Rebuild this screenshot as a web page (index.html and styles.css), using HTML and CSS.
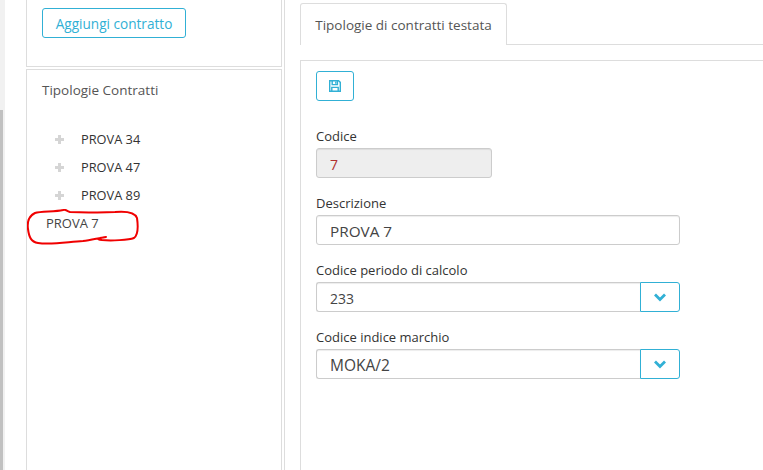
FILE: index.html
```html
<!DOCTYPE html>
<html lang="it">
<head>
  <meta charset="UTF-8">
  <title>Tipologie di contratti</title>
  <link rel="stylesheet" href="styles.css">
</head>
<body>
  <div class="scroll-strip"><div class="scroll-thumb"></div></div>
  <div class="sidebar">
    <div class="panel panel-top">
      <button class="btn-outline" type="button">Aggiungi contratto</button>
    </div>
    <div class="panel panel-tree">
      <div class="tree-title">Tipologie Contratti</div>
      <ul class="tree">
        <li><span class="plus"></span>PROVA 34</li>
        <li><span class="plus"></span>PROVA 47</li>
        <li><span class="plus"></span>PROVA 89</li>
        <li class="leaf">PROVA 7</li>
      </ul>
      <svg class="scribble" width="114" height="40" viewBox="0 0 114 40" fill="none">
        <path d="M36 1 C28 3 14 2 8 4 C2 7 0 13 1 20 C2 28 4 33 11 34 C24 36 40 33 56 32 C64 31 72 29 79 28 C72 29 68 30 75 31 C84 32 102 31 107 29 C111 26 111 16 110 9 C108 3 100 2 88 3 C70 4 52 3 43 3 C40 2 38 0 36 1 Z" stroke="#f00000" stroke-width="2" stroke-linejoin="round"/>
      </svg>
    </div>
  </div>
  <div class="rule"></div>
  <div class="main">
    <div class="tabs">
      <div class="tab">Tipologie di contratti testata</div>
    </div>
    <div class="content">
      <button class="btn-save" type="button" aria-label="Salva">
        <svg width="14" height="14" viewBox="0 0 14 14" fill="none" stroke="#31b0d5" stroke-width="1.4">
          <path d="M1.7 1.7 H10.6 L12.3 3.4 V12.3 H1.7 Z"/>
          <path d="M4.2 2 V5.6 H9.4 V2"/>
          <path d="M3.8 12 V8.4 H10.2 V12"/>
          <path d="M7.8 2.6 V4.8"/>
        </svg>
      </button>
      <div class="field">
        <label>Codice</label>
        <div class="input input-disabled">7</div>
      </div>
      <div class="field">
        <label>Descrizione</label>
        <div class="input input-wide">PROVA 7</div>
      </div>
      <div class="field">
        <label>Codice periodo di calcolo</label>
        <div class="combo">
          <div class="combo-value combo-small">233</div>
          <div class="combo-btn"><svg width="14" height="9" viewBox="0 0 14 9" fill="none" stroke="#31b0d5" stroke-width="2.8"><path d="M2 1.5 L7 6.5 L12 1.5"/></svg></div>
        </div>
      </div>
      <div class="field">
        <label>Codice indice marchio</label>
        <div class="combo">
          <div class="combo-value">MOKA/2</div>
          <div class="combo-btn"><svg width="14" height="9" viewBox="0 0 14 9" fill="none" stroke="#31b0d5" stroke-width="2.8"><path d="M2 1.5 L7 6.5 L12 1.5"/></svg></div>
        </div>
      </div>
    </div>
  </div>
</body>
</html>
```

FILE: styles.css
```css
body {
  margin: 0;
  height: 470px;
  overflow: hidden;
  display: flex;
  background: #fff;
  font-family: "Open Sans", sans-serif;
  font-size: 13.5px;
  color: #333;
}
.scroll-strip {
  width: 5px;
  background: #f1f1f1;
  flex: none;
  padding-top: 110px;
  box-sizing: border-box;
}
.scroll-thumb {
  width: 3px;
  height: 360px;
  background: #c1c1c1;
}
.sidebar {
  width: 256px;
  margin-left: 21px;
  flex: none;
  display: flex;
  flex-direction: column;
}
.panel {
  border-left: 1px solid #ddd;
  border-right: 1px solid #ddd;
}
.panel-top {
  height: 58px;
  border-bottom: 1px solid #ddd;
  padding: 8px 0 0 15px;
}
.btn-outline {
  display: block;
  width: 144px;
  height: 30px;
  padding: 0;
  background: #fff;
  border: 1px solid #31b0d5;
  border-radius: 3px;
  color: #31b0d5;
  font-family: inherit;
  font-size: 13.6px;
}
.panel-tree {
  position: relative;
  flex: 1;
  margin-top: 2px;
  border-top: 1px solid #ddd;
  padding: 11px 0 0 15px;
}
.tree-title {
  line-height: 18px;
  color: #555;
}
.tree {
  list-style: none;
  margin: 26px 0 0;
  padding: 0;
  font-size: 12.8px;
}
.tree li {
  display: flex;
  align-items: center;
  height: 28px;
  padding-left: 13px;
  color: #333;
}
.tree .leaf {
  padding-left: 4px;
  font-size: 13px;
  color: #444;
}
.plus {
  width: 9px;
  height: 9px;
  margin-right: 17px;
  background:
    linear-gradient(#d5d5d5, #d5d5d5) center / 9px 3px no-repeat,
    linear-gradient(#d5d5d5, #d5d5d5) center / 3px 9px no-repeat;
}
.scribble {
  position: absolute;
  left: 0;
  top: 139px;
}
.rule {
  width: 1px;
  margin-left: 2px;
  background: #ddd;
  flex: none;
}
.main {
  flex: 1;
  margin-left: 15px;
  min-width: 0;
}
.tabs {
  height: 45px;
  padding-top: 3px;
  box-sizing: border-box;
  border-bottom: 1px solid #ddd;
}
.tab {
  width: 207px;
  height: 42px;
  box-sizing: border-box;
  background: #fff;
  border: 1px solid #ddd;
  border-bottom: 0;
  border-radius: 3px 3px 0 0;
  line-height: 42px;
  text-align: center;
  color: #555;
}
.content {
  margin-top: 15px;
  height: 410px;
  box-sizing: border-box;
  border-top: 1px solid #ddd;
  border-left: 1px solid #ddd;
  padding: 10px 0 0 15px;
}
.btn-save {
  display: flex;
  align-items: center;
  justify-content: center;
  width: 38px;
  height: 30px;
  padding: 0;
  background: #fff;
  border: 1px solid #31b0d5;
  border-radius: 3px;
}
.field {
  height: 67px;
}
.btn-save + .field {
  margin-top: 26px;
}
label {
  display: block;
  height: 19px;
  line-height: 19px;
  font-size: 13px;
  font-weight: 500;
  color: #333;
}
.input {
  box-sizing: border-box;
  height: 30px;
  line-height: 31px;
  padding-left: 13px;
  margin-top: 2px;
  border: 1px solid #ccc;
  border-radius: 3px;
  box-shadow: inset 0 1px 1px rgba(0, 0, 0, 0.075);
  font-size: 15.3px;
  color: #444;
}
.input-disabled {
  width: 176px;
  background: #eee;
  color: #b03030;
  font-size: 14px;
}
.input-wide {
  width: 364px;
}
.combo {
  display: flex;
  width: 364px;
  height: 30px;
  margin-top: 2px;
}
.combo-value {
  flex: 1;
  box-sizing: border-box;
  padding-left: 13px;
  line-height: 31px;
  border: 1px solid #ccc;
  border-right: 0;
  border-radius: 3px 0 0 3px;
  box-shadow: inset 0 1px 1px rgba(0, 0, 0, 0.075);
  font-size: 15.5px;
  color: #444;
}
.combo-small {
  font-size: 14px;
}
.combo-btn {
  display: flex;
  align-items: center;
  justify-content: center;
  width: 40px;
  box-sizing: border-box;
  border: 1px solid #31b0d5;
  border-radius: 0 3px 3px 0;
}
```
